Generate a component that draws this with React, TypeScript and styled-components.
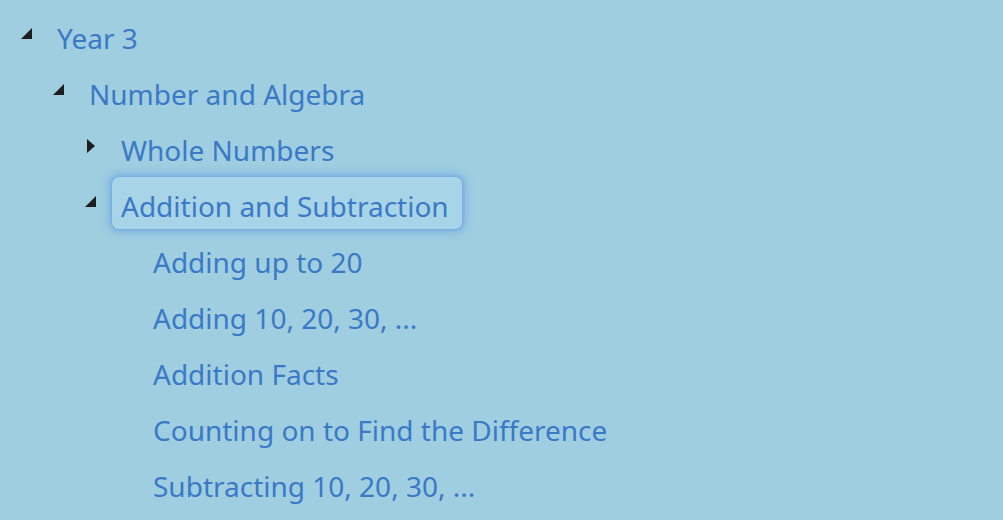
import React from "react";
import styled, { createGlobalStyle } from "styled-components";

const Global = createGlobalStyle`
  html, body { margin: 0; padding: 0; background: #9fcee1; }
  body { font-family: "Noto Sans", "Open Sans", sans-serif; }
`;

const Tree = styled.ul`
  list-style: none;
  margin: 0;
  padding: 7px 0 0 0;
  width: 1003px;
  height: 520px;
  box-sizing: border-box;
  overflow: hidden;
`;

const Row = styled.li<{ $level: number }>`
  display: flex;
  align-items: center;
  height: 56px;
  padding-left: ${(p) => 16 + p.$level * 32}px;
`;

const Arrow = styled.span`
  width: 32px;
  height: 52px;
  flex: none;
  display: flex;
  align-items: center;
`;

const Label = styled.span<{ $selected?: boolean }>`
  display: inline-flex;
  align-items: center;
  height: 52px;
  box-sizing: border-box;
  padding: 6px 13px 0 9px;
  font-size: 28px;
  color: #3a79c6;
  white-space: nowrap;
  border-radius: 7px;
  ${(p) =>
    p.$selected
      ? `background: #a8d4e7; box-shadow: 0 0 2px 1px rgba(110,165,230,0.5), 0 0 9px 3px rgba(90,150,230,0.55);`
      : ""}
`;

const Expanded = () => (
  <svg width="12" height="12" viewBox="0 0 12 12" style={{ marginLeft: 5, marginTop: -2 }}>
    <polygon points="11,0 11,11 0,11" fill="#1e1e1e" />
  </svg>
);

const Collapsed = () => (
  <svg width="9" height="14" viewBox="0 0 9 14" style={{ marginLeft: 7, marginTop: -3 }}>
    <polygon points="0,0 8,7 0,14" fill="#1e1e1e" />
  </svg>
);

type Item = { label: string; level: number; state?: "open" | "closed"; selected?: boolean };

const items: Item[] = [
  { label: "Year 3", level: 0, state: "open" },
  { label: "Number and Algebra", level: 1, state: "open" },
  { label: "Whole Numbers", level: 2, state: "closed" },
  { label: "Addition and Subtraction", level: 2, state: "open", selected: true },
  { label: "Adding up to 20", level: 3 },
  { label: "Adding 10, 20, 30, ...", level: 3 },
  { label: "Addition Facts", level: 3 },
  { label: "Counting on to Find the Difference", level: 3 },
  { label: "Subtracting 10, 20, 30, ...", level: 3 },
];

export default function App() {
  return (
    <>
      <Global />
      <Tree>
        {items.map((it, i) => (
          <Row key={i} $level={it.level}>
            <Arrow>
              {it.state === "open" && <Expanded />}
              {it.state === "closed" && <Collapsed />}
            </Arrow>
            <Label $selected={it.selected}>{it.label}</Label>
          </Row>
        ))}
      </Tree>
    </>
  );
}
